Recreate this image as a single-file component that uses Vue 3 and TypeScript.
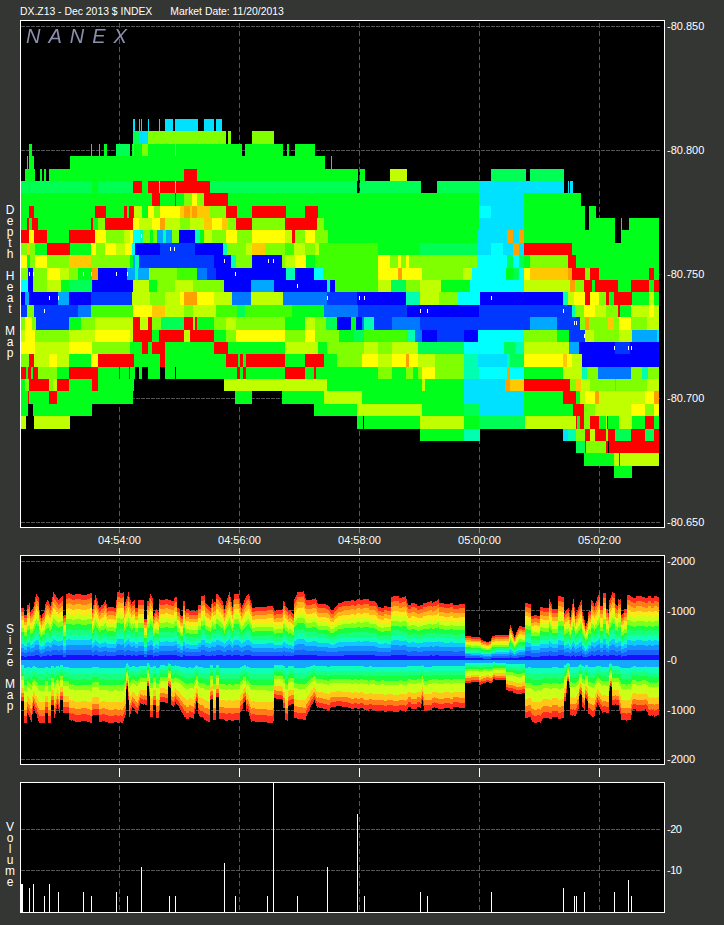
<script setup lang="ts">
import { onMounted, ref } from 'vue'

const heatCanvas = ref<HTMLCanvasElement | null>(null)
const sizeCanvas = ref<HTMLCanvasElement | null>(null)
const volCanvas = ref<HTMLCanvasElement | null>(null)

const priceLabels = ['-80.850', '-80.800', '-80.750', '-80.700', '-80.650']
const sizeLabels = ['-2000', '-1000', '-0', '-1000', '-2000']
const times = ['04:54:00', '04:56:00', '04:58:00', '05:00:00', '05:02:00']
const gridX = [119, 239, 359, 479, 599]

const palette: Record<string, string> = {
  R: '#ff0000', O: '#ffa000', A: '#ffc800', Y: '#ffff00', L: '#c0ff00', K: '#80ff00', J: '#40ff00',
  G: '#00ff1a', M: '#00ff55', T: '#00ffb0', C: '#00ffff', S: '#00e0ff', U: '#00a8ff', P: '#0078ff', V: '#0038ff', B: '#0000ff',
}

// each row: colour key + x where that run ends, _ is empty
const rows = [
  '_133 S135 _139 S140 _141 S142 _148 S149 _159 S160 _165 S173 _175 S198 _204 S214 _216 S222',
  '_133 M139 S141 G142 S148 K226 _228 K231 _252 K274',
  '_29 G32 _91 G92 _99 G100 _104 G107 _116 M130 _132 G133 K134 G142 K148 G175 K176 G242 _245 G283 _287 G289 _295 G315',
  '_27 G28 _29 G34 _70 G325 _331 G332',
  '_25 G35 _40 G42 _44 G46 _49 G184 R197 G358 _360 G365 _390 L407 _491 M526 _530 M564',
  'M29 G30 M92 G98 M133 R142 G148 R159 K160 R175 K176 R210 M357 _360 M421 _437 M479 S564 _568 S569 _570 S573',
  'G152 R160 G175 R176 G184 K192 Y197 K204 R228 G479 S524 G581',
  'G29 R34 G95 R106 G124 R127 G129 R134 L142 G148 Y154 K160 Y180 A184 O190 A192 O197 A210 K226 R237 G252 R286 G305 R318 G479 C491 S524 G585 _589 G596',
  'G27 R29 G32 R38 G91 R93 G98 K105 R133 Y139 L152 Y160 O165 L180 K190 L204 A212 Y222 A228 K236 R252 K285 R317 K324 G479 S524 G585 _589 G615 _621 G622 _629 G659',
  'R29 Y34 R47 G69 R95 Y106 K124 L130 Y133 C140 T143 K150 G153 K157 U163 T166 U172 K179 B195 T200 G204 L212 K226 Y237 K252 Y285 L292 R295 K305 Y315 K328 G478 S507 O513 S519 O524 G615 _621 G659',
  'K27 A30 K35 G47 R70 G91 Y96 K105 Y116 L125 Y132 C135 B160 V195 B223 T227 K246 L252 A265 K285 J294 L305 K315 L319 J378 G420 M478 S491 C503 S513 O519 S524 R572 G659',
  'Y27 G30 K35 Y47 K69 A91 K130 G133 U135 T139 V214 B231 T236 K252 B282 K285 L295 Y306 G315 J378 Y390 K398 Y401 K406 Y409 K477 C507 M513 C519 M524 G530 K568 R576 G659',
  'K28 B33 K47 Y60 L69 K78 G92 O98 B127 U135 T138 U149 K177 J197 P207 V216 B286 T295 B314 C323 J378 Y398 O402 Y422 K463 L472 C506 G513 M519 C524 Y530 A568 O572 R585 K590 R599 G649 R654 G659',
  'C28 B33 K47 L61 G69 M92 B133 L149 G157 K175 L184 L193 K224 B251 U274 B327 T330 B335 J378 L391 M406 K420 L441 G470 C524 L570 O575 K584 R592 G595 R618 G631 R649 G654 R659',
  'B25 U29 B58 U69 B91 V132 L150 K165 L180 Y184 O197 Y214 L232 P251 L283 P327 V357 B406 T420 L439 K458 C480 B563 T568 L574 Y585 R590 Y599 K606 R609 G614 R632 G649 L654 G659',
  'V27 K34 V78 P91 J133 Y152 A165 L184 K193 L216 J237 M245 J292 G324 P358 V407 B479 V572 T575 K584 Y595 L606 K618 R620 G631 L649 Y654 L659',
  'K25 Y32 K36 V69 G81 K95 L133 R140 L148 R152 K161 M184 R193 K195 R197 G214 K226 L236 K285 G305 L315 K326 M337 B351 G356 B362 P364 T374 V392 P420 V477 V530 U557 V580 K585 O589 K608 A614 K619 Y631 K647 L659',
  'L25 Y35 K69 L95 Y130 L133 R152 G159 R184 L190 R214 G226 K236 Y285 K305 Y315 K339 G354 M364 J407 T415 P422 B437 V464 B478 C524 K557 G569 V585 L594 K619 L632 U657 S659',
  'Y35 L69 Y92 K130 G142 R148 G152 R165 G214 R228 G285 L318 G327 K364 L378 K392 L418 M464 C504 M515 T524 L569 U579 B615 V630 B659',
  'K29 R34 L49 Y57 L69 G91 Y98 R134 G160 R165 G226 R238 G240 R243 G246 R285 G305 R324 G337 K362 Y378 L392 Y406 O409 Y418 L435 K464 T478 S507 T510 M524 Y563 A567 Y572 L582 B659',
  'R26 G28 R31 G33 R38 K57 G69 R98 G119 R120 G129 R130 G135 _139 G142 _148 G160 _165 G175 _176 G237 R240 G243 R246 G285 R305 G314 R316 G378 K392 G406 K413 G418 K422 Y435 K464 T479 C507 O510 C524 G563 L582 T587 K598 P631 K642 T648 K659',
  'G25 K29 R49 K53 L57 R69 G92 R98 G134 _224 L327 G422 L425 G464 S505 O510 A524 R570 K576 A581 L590 K615 T616 K647 L659',
  'G28 R29 G49 R57 G133 _235 G252 _282 G324 L361 L362 G464 S524 G563 R576 G580 L585 Y595 O599 L645 Y654 O659',
  'G28 _33 G92 _314 G357 L422 G464 M479 S524 G573 R584 K595 L631 Y645 K654 Y659',
  'L26 _34 L70 _357 G363 _364 G420 L464 G479 M525 L576 R577 G580 R584 K590 R599 G606 L607 R608 G619 L632 G645 R654 G659',
  '_420 G464 T480 _563 S568 T576 K585 R590 L595 R606 K608 R615 M631 R645 M654 R659',
  '_576 M585 R586 K606 R608 _609 R659',
  '_584 G614 L619 R620 L659',
  '_614 G632',
]

// white prints in the blue rows: [row, x]
const prints = [
  [9, 141], [10, 170], [10, 174], [11, 224], [11, 268], [11, 273], [12, 29], [12, 33], [12, 83], [12, 91],
  [12, 116], [12, 127], [12, 235], [13, 297], [14, 49], [14, 58], [14, 327], [14, 359], [14, 364], [14, 491],
  [15, 44], [15, 420], [15, 427], [15, 563], [16, 574], [16, 576], [17, 584], [18, 614], [18, 628], [18, 631],
]

// size map outline, read off the chart as [x, y] of the band edges
const upper: number[][] = [
  [21, 595], [26, 595], [27, 605], [28, 605], [32, 599], [33, 608], [36, 593], [39, 598], [42, 609], [47, 600], [50, 607],
  [53, 592], [58, 600], [68, 593], [70, 594], [91, 594], [92, 610], [95, 595], [99, 608], [105, 600], [107, 608], [115, 608],
  [117, 593], [123, 593], [124, 607], [128, 592], [131, 603], [134, 600], [148, 600], [150, 594], [153, 600], [155, 594], [160, 600],
  [173, 600], [175, 597], [184, 600], [185, 610], [197, 610], [198, 595], [204, 595], [205, 603], [210, 608], [213, 595], [217, 593],
  [222, 600], [224, 608], [229, 591], [232, 607], [234, 593], [238, 593], [241, 608], [246, 595], [248, 593], [252, 607], [273, 607],
  [274, 610], [282, 610], [283, 594], [287, 598], [290, 597], [293, 600], [297, 592], [303, 592], [305, 599], [315, 599], [317, 604],
  [325, 604], [328, 607], [333, 610], [338, 602], [362, 600], [374, 600], [378, 607], [390, 607], [391, 597], [405, 597], [407, 604],
  [421, 605], [438, 600], [439, 604], [464, 604], [465, 637], [479, 637], [481, 641], [490, 641], [492, 635], [508, 635], [510, 624],
  [514, 637], [519, 627], [524, 627], [525, 603], [530, 603], [531, 616], [539, 616], [540, 608], [548, 608], [549, 600], [552, 608],
  [557, 608], [558, 597], [563, 597], [564, 613], [568, 607], [570, 617], [573, 598], [575, 615], [582, 596], [585, 608], [589, 598],
  [594, 605], [599, 592], [607, 592], [609, 600], [612, 593], [615, 595], [619, 600], [624, 595], [629, 595], [631, 597], [659, 597],
]
const lower: number[][] = [
  [21, 723], [26, 723], [27, 713], [31, 721], [33, 705], [38, 722], [53, 722], [57, 705], [59, 713], [68, 713], [69, 720], [74, 722],
  [91, 722], [92, 715], [98, 715], [99, 722], [119, 722], [122, 723], [127, 708], [128, 722], [132, 707], [137, 713], [140, 703],
  [148, 707], [149, 717], [158, 717], [160, 702], [167, 702], [173, 708], [175, 702], [184, 718], [190, 718], [193, 720], [195, 710],
  [200, 717], [208, 722], [213, 720], [223, 720], [225, 721], [240, 721], [247, 710], [251, 722], [273, 722], [274, 699], [282, 699],
  [283, 717], [287, 720], [293, 719], [305, 719], [314, 700], [317, 707], [328, 710], [333, 707], [362, 708], [373, 711], [405, 711],
  [407, 708], [420, 708], [422, 700], [424, 710], [436, 708], [464, 708], [465, 682], [478, 682], [479, 685], [481, 683], [492, 683],
  [493, 680], [505, 680], [506, 690], [514, 693], [524, 693], [525, 718], [530, 718], [532, 722], [540, 722], [542, 718], [563, 718],
  [564, 701], [568, 701], [570, 715], [575, 717], [580, 703], [587, 713], [594, 717], [597, 703], [602, 713], [608, 713], [610, 703],
  [618, 705], [621, 719], [630, 720], [632, 710], [645, 710], [647, 713], [652, 717], [655, 715], [659, 715],
]

// stretches of the size map where the book flickers from column to column
const busy = [[21, 72], [118, 185], [196, 250], [283, 300], [566, 628]]

const upperBands = ['#ff2d20', '#ff7a18', '#ffb418', '#ffe818', '#ccff18', '#80ff18', '#18ff40', '#18ff80', '#10ffb8', '#10c8ff', '#1490ff', '#1a60ff', '#1a10ff']
const lowerBands: [string, number][] = [
  ['#14a8ff', 24], ['#10ffb8', 18], ['#18ff80', 16], ['#18ff40', 16], ['#80ff18', 16],
  ['#ccff18', 34], ['#ffc818', 22], ['#ff7a18', 18], ['#ff2d20', 20],
]

// [x, top y] of each volume bar, baseline is 912
const volumeBars = [
  [21, 884], [22, 884], [29, 888], [33, 884], [44, 896], [49, 884], [58, 892], [83, 892], [91, 896], [116, 892], [127, 896],
  [141, 867], [169, 896], [175, 896], [224, 863], [235, 896], [267, 896], [273, 782], [297, 896], [327, 867], [357, 814], [364, 896],
  [420, 892], [427, 896], [491, 892], [563, 888], [574, 896], [576, 896], [584, 892], [614, 892], [628, 880], [631, 896],
]

function grid(ctx: CanvasRenderingContext2D, w: number, h: number, ys: number[], ox: number, oy: number) {
  ctx.fillStyle = '#555'
  for (const y of ys) {
    for (let x = 0; x < 638; x += 5) ctx.fillRect(x, y - oy, 4, 1)
  }
  for (const gx of gridX) {
    for (let y = 2; y < h; y += 8) ctx.fillRect(gx - ox, y, 1, 5)
  }
}

function outline(points: number[][], x: number) {
  for (let i = 1; i < points.length; i++) {
    if (x <= points[i][0]) {
      const a = points[i - 1]
      const b = points[i]
      const t = b[0] === a[0] ? 1 : (x - a[0]) / (b[0] - a[0])
      return a[1] + (b[1] - a[1]) * t
    }
  }
  return points[points.length - 1][1]
}

function noise(n: number) {
  const v = Math.sin(n * 12.9898) * 43758.5453
  return v - Math.floor(v)
}

function drawHeat(c: HTMLCanvasElement) {
  const ctx = c.getContext('2d')!
  ctx.fillStyle = '#000'
  ctx.fillRect(0, 0, c.width, c.height)
  grid(ctx, c.width, c.height, [26, 150, 274, 398, 522], 21, 21)
  rows.forEach((row, i) => {
    const top = Math.round(119 + 12.385 * i) - 21
    const bottom = Math.round(119 + 12.385 * (i + 1)) - 21
    let from = 21
    for (const run of row.split(' ')) {
      const to = Number(run.slice(1))
      if (run[0] !== '_') {
        ctx.fillStyle = palette[run[0]]
        ctx.fillRect(from - 21, top, to - from, bottom - top)
      }
      from = to
    }
  })
  ctx.fillStyle = '#fff'
  for (const [r, x] of prints) {
    ctx.fillRect(x - 21, Math.round(119 + 12.385 * r) - 21 + 4, 1, 4)
  }
}

function drawSize(c: HTMLCanvasElement) {
  const ctx = c.getContext('2d')!
  ctx.fillStyle = '#000'
  ctx.fillRect(0, 0, c.width, c.height)
  grid(ctx, c.width, c.height, [561, 610, 710, 759], 21, 556)
  const zero = 660 - 556
  for (let x = 21; x < 659; x++) {
    const step = Math.floor(x / 3)
    const nudge = Math.round(noise(step) * 2) - 1
    const isBusy = busy.some(([a, b]) => x >= a && x < b)
    const dipUp = isBusy && noise(step + 500) > 0.72 ? 6 + noise(step + 900) * 14 : 0
    const dipDown = isBusy && noise(step + 1300) > 0.72 ? 6 + noise(step + 1700) * 18 : 0
    const up = Math.round(660 - outline(upper, x) + nudge - dipUp)
    const down = Math.round(outline(lower, x) - 660 + nudge - dipDown)
    upperBands.forEach((col, k) => {
      const a = Math.round((up * k) / upperBands.length)
      const b = Math.round((up * (k + 1)) / upperBands.length)
      ctx.fillStyle = col
      ctx.fillRect(x - 21, zero - up + a, 1, b - a)
    })
    const total = lowerBands.reduce((s, b) => s + b[1], 0)
    let sum = 0
    for (const [col, weight] of lowerBands) {
      const a = Math.round((down * sum) / total)
      sum += weight
      const b = Math.round((down * sum) / total)
      ctx.fillStyle = col
      ctx.fillRect(x - 21, zero + a, 1, b - a)
    }
    ctx.fillStyle = '#1a10ff'
    ctx.fillRect(x - 21, zero - 1, 1, 1)
  }
}

function drawVolume(c: HTMLCanvasElement) {
  const ctx = c.getContext('2d')!
  ctx.fillStyle = '#000'
  ctx.fillRect(0, 0, c.width, c.height)
  grid(ctx, c.width, c.height, [829, 870], 21, 783)
  ctx.fillStyle = '#fff'
  for (const [x, top] of volumeBars) {
    ctx.fillRect(x - 21, top - 783, 1, 912 - top)
  }
}

onMounted(() => {
  if (heatCanvas.value) drawHeat(heatCanvas.value)
  if (sizeCanvas.value) drawSize(sizeCanvas.value)
  if (volCanvas.value) drawVolume(volCanvas.value)
})
</script>

<template>
  <div class="page">
    <div class="title">
      <span>DX.Z13 - Dec 2013 $ INDEX</span>
      <span class="date">Market Date: 11/20/2013</span>
    </div>

    <div class="row heat-row">
      <div class="side">
        <span v-for="(l, i) in 'Depth Heat Map'" :key="i" class="letter">{{ l }}</span>
      </div>
      <div class="panel">
        <canvas ref="heatCanvas" width="643" height="506"></canvas>
        <div class="logo">NANEX</div>
      </div>
      <div class="axis spread">
        <span v-for="p in priceLabels" :key="p">{{ p }}</span>
      </div>
    </div>

    <div class="times">
      <div v-for="t in times" :key="t" class="time">
        <i class="dash"></i>
        <span>{{ t }}</span>
        <i class="tick"></i>
      </div>
    </div>

    <div class="row size-row">
      <div class="side">
        <span v-for="(l, i) in 'Size Map'" :key="i" class="letter">{{ l }}</span>
      </div>
      <div class="panel">
        <canvas ref="sizeCanvas" width="643" height="208"></canvas>
      </div>
      <div class="axis spread">
        <span v-for="(s, i) in sizeLabels" :key="i">{{ s }}</span>
      </div>
    </div>

    <div class="ticks">
      <div v-for="t in times" :key="t" class="tick-cell"><i></i></div>
    </div>

    <div class="row vol-row">
      <div class="side">
        <span v-for="(l, i) in 'Volume'" :key="i" class="letter">{{ l }}</span>
      </div>
      <div class="panel">
        <canvas ref="volCanvas" width="643" height="129"></canvas>
      </div>
      <div class="axis vol-axis">
        <span>-20</span>
        <span>-10</span>
      </div>
    </div>
  </div>
</template>

<style scoped>
.page { width: 724px; height: 925px; overflow: hidden; background: #343633; color: #fff; font-family: "Liberation Sans", Arial, sans-serif; font-size: 11px; line-height: 12px; }
.title { height: 20px; padding: 6px 0 0 20px; box-sizing: border-box; display: flex; white-space: pre; font-size: 10.4px; }
.date { margin-left: 18px; }
.row { display: flex; }
.heat-row { height: 508px; }
.size-row { height: 210px; }
.vol-row { height: 131px; }
.side { width: 20px; flex-shrink: 0; padding-top: 15px; box-sizing: border-box; display: flex; flex-direction: column; align-items: center; justify-content: center; }
.letter { display: block; height: 11px; line-height: 11px; font-size: 12px; }
.panel { position: relative; width: 645px; flex-shrink: 0; border: 1px solid #fff; box-sizing: border-box; background: #000; }
.panel canvas { display: block; }
.logo { position: absolute; left: 5px; top: 3px; font-size: 20px; line-height: 24px; font-style: italic; letter-spacing: 8px; color: #8c8fae; }
.axis { flex: 1; display: flex; flex-direction: column; padding-left: 2px; }
.spread { justify-content: space-between; }
.vol-axis { padding-top: 41px; gap: 29px; letter-spacing: -0.5px; }
.times { height: 27px; padding-left: 59.5px; display: flex; }
.time { width: 120px; display: flex; flex-direction: column; align-items: center; }
.dash { width: 1px; height: 5px; background: #777; }
.time span { margin-top: 1px; height: 13px; }
.tick { width: 1px; height: 6px; margin-top: 1px; background: #ccc; }
.ticks { height: 17px; padding: 3px 0 0 59.5px; box-sizing: border-box; display: flex; }
.tick-cell { width: 120px; display: flex; justify-content: center; }
.tick-cell i { width: 1px; height: 9px; background: #fff; }
</style>

<style>
html, body { background: #343633; }
</style>
